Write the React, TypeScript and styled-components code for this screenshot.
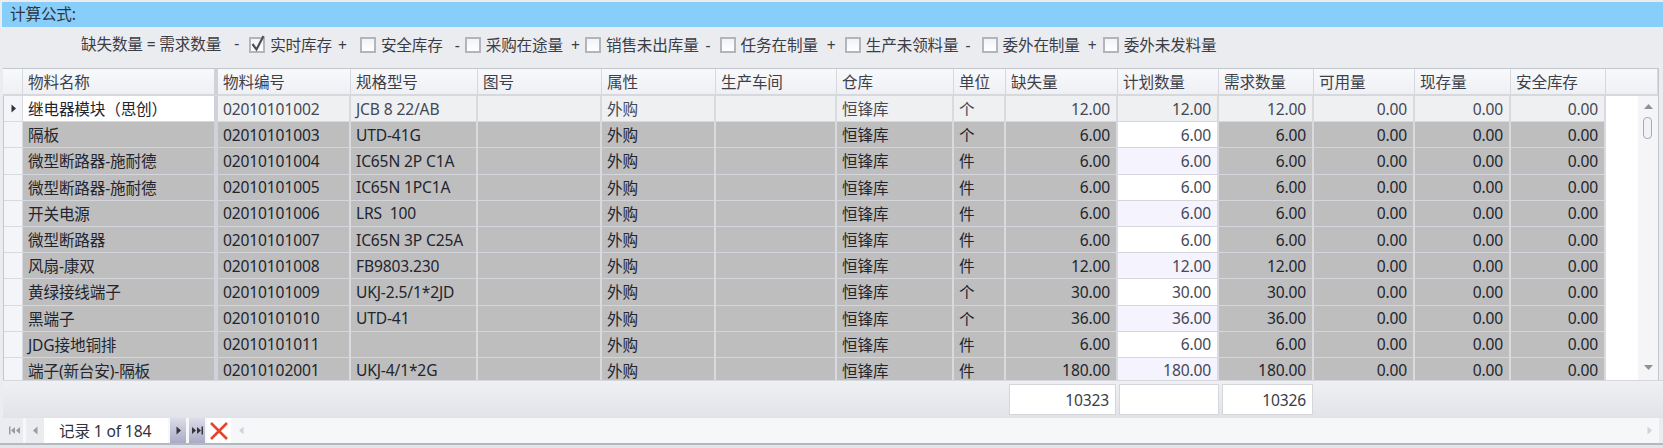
import React from 'react';
import styled, { createGlobalStyle } from 'styled-components';

const GRID = '20px 195px 133px 127px 124px 114px 121px 117px 52px 112px 101px 95px 101px 96px 95px';

const GlobalStyle = createGlobalStyle`
  html, body {
    margin: 0;
    padding: 0;
    background: #ebecf0;
    overflow: hidden;
  }
  * {
    box-sizing: border-box;
  }
`;

const Page = styled.div`
  width: 1663px;
  height: 448px;
  display: flex;
  flex-direction: column;
  padding-top: 2px;
  background: #ebecf0;
  font-family: 'Noto Sans', 'Noto Sans CJK SC', sans-serif;
  font-size: 15.6px;
  letter-spacing: -0.15px;
  color: #33363f;
  overflow: hidden;
`;

const TitleBar = styled.div`
  height: 25px;
  flex: none;
  display: flex;
  align-items: center;
  margin-left: 2px;
  padding-left: 8px;
  background: #87cefa;
  color: #30343c;
  line-height: 1;
`;

const Toolbar = styled.div`
  height: 41px;
  flex: none;
  display: flex;
  align-items: center;
  padding: 0 0 6px 81px;
  color: #3a3d46;
  white-space: nowrap;
`;

const Lead = styled.span`
  display: flex;
  flex: none;
  padding-bottom: 3px;
`;

const Op = styled.span<{ $width: number; $pad: number }>`
  width: ${(p) => p.$width}px;
  padding-left: ${(p) => p.$pad}px;
  flex: none;
`;

const Term = styled.label`
  display: flex;
  align-items: center;
  gap: 5px;
  flex: none;
`;

const Box = styled.span`
  width: 16px;
  height: 16px;
  flex: none;
  position: relative;
  border: 2px solid #b3b5bc;
  background: linear-gradient(#f2f3f5, #ffffff);
`;

const Tick = styled.svg`
  position: absolute;
  left: -1px;
  top: -5px;
  overflow: visible;
`;

const Table = styled.div`
  margin: 0 4px 0 3px;
  display: flex;
  flex-direction: column;
  border-top: 1px solid #c4c6cd;
  border-left: 1px solid #c4c6cd;
  border-right: 1px solid #c4c6cd;
`;

const HeaderRow = styled.div`
  display: grid;
  grid-template-columns: ${GRID} 1fr;
  margin-left: -1px;
  height: 27px;
`;

const HeaderCell = styled.div<{ $thick?: boolean }>`
  display: flex;
  align-items: center;
  padding: 0 0 1px 5px;
  background: linear-gradient(#f8f9fb, #eff0f4);
  border-right: ${(p) => (p.$thick ? '4px solid #d0d2d9' : '1px solid #d6d8de')};
  border-bottom: 2px solid #d6d8de;
  color: #3d4049;
  white-space: nowrap;
`;

const Body = styled.div`
  display: flex;
  height: 284px;
  overflow: hidden;
  background: #ffffff;
`;

const Rows = styled.div`
  width: 1602px;
  flex: none;
`;

const Row = styled.div`
  display: grid;
  grid-template-columns: ${GRID};
  margin-left: -1px;
  height: 26.2px;
`;

const Cell = styled.div<{ $bg: string; $right?: boolean; $thick?: boolean; $dim?: boolean }>`
  display: flex;
  align-items: center;
  justify-content: ${(p) => (p.$right ? 'flex-end' : 'flex-start')};
  padding: ${(p) => (p.$right ? '0 6px 0 0' : '0 0 0 5px')};
  background: ${(p) => p.$bg};
  border-right: ${(p) => (p.$thick ? '4px solid #d0d2d9' : '2px solid #d9dae0')};
  border-bottom: 1px solid #d6d7de;
  color: ${(p) => (p.$dim ? '#454856' : '#22252e')};
  white-space: pre;
  overflow: hidden;
`;

const Indicator = styled.div`
  display: flex;
  align-items: center;
  justify-content: center;
  background: #f4f5f8;
  border-left: 1px solid #c4c6cd;
  border-right: 1px solid #d9dae0;
  border-bottom: 1px solid #d9dae0;
`;

const Blank = styled.div`
  flex: 1;
  background: #ffffff;
`;

const ScrollBar = styled.div`
  width: 20px;
  flex: none;
  position: relative;
  background: #f5f5f8;
`;

const ArrowSlot = styled.svg<{ $bottom?: boolean }>`
  position: absolute;
  left: 6px;
  ${(p) => (p.$bottom ? 'bottom: 10px;' : 'top: 8px;')}
`;

const Thumb = styled.div`
  position: absolute;
  left: 5px;
  top: 21px;
  width: 9px;
  height: 22px;
  border: 1px solid #a9abb3;
  border-radius: 4px;
  background: #f1f2f5;
`;

const Footer = styled.div`
  display: grid;
  grid-template-columns: ${GRID};
  height: 38px;
  flex: none;
  margin-left: 3px;
  padding: 3px 0;
  background: linear-gradient(#eff0f3, #e2e3e8);
  border-top: 1px solid #d6d7dd;
`;

const FooterCell = styled.div<{ $col: number; $ml: number; $mr: number }>`
  grid-column: ${(p) => p.$col};
  margin-left: ${(p) => p.$ml}px;
  margin-right: ${(p) => p.$mr}px;
  display: flex;
  align-items: center;
  justify-content: flex-end;
  padding-right: 6px;
  background: #ffffff;
  border: 1px solid #d4d6dc;
  color: #3a3d48;
`;

const Nav = styled.div`
  height: 25px;
  flex: none;
  display: flex;
  align-items: stretch;
  margin-left: 5px;
  margin-right: 4px;
  background: #f6f7f9;
`;

const NavButton = styled.div<{ $state: 'off' | 'on' | 'del' }>`
  width: ${(p) => (p.$state === 'del' ? '24px' : p.$state === 'on' ? '16px' : '18px')};
  flex: none;
  display: flex;
  align-items: center;
  justify-content: center;
  margin-left: ${(p) => (p.$state === 'del' ? '-1px' : '0')};
  margin-right: ${(p) => (p.$state === 'del' ? '0' : '3px')};
  background: ${(p) =>
    p.$state === 'on'
      ? 'linear-gradient(#dcdce9, #abaac6)'
      : p.$state === 'off'
        ? '#ebecef'
        : '#ffffff'};
`;

const RecordLabel = styled.div`
  width: 124px;
  flex: none;
  margin: 0 2px 0 -3px;
  padding-left: 15px;
  display: flex;
  align-items: center;
  background: #ffffff;
  color: #2f3340;
  white-space: nowrap;
`;

const NavTrack = styled.div`
  flex: 1;
  display: flex;
  align-items: center;
  justify-content: space-between;
  padding: 0 6px 0 7px;
`;

const BottomEdge = styled.div`
  flex: 1;
  background: linear-gradient(#b6b8bf 0 2px, #e4e5ea 2px);
`;

const Arrow = ({ dir, color }: { dir: 'l' | 'r'; color: string }) => (
  <svg width="7" height="11" viewBox="0 0 7 11">
    <path d={dir === 'r' ? 'M1.5 1.5 L6 5.5 L1.5 9.5 Z' : 'M5.5 1.5 L1 5.5 L5.5 9.5 Z'} fill={color} />
  </svg>
);

const Double = ({ dir, color }: { dir: 'l' | 'r'; color: string }) => (
  <svg width="13" height="11" viewBox="0 0 13 11">
    {dir === 'l' ? (
      <>
        <rect x="1" y="1.5" width="1.5" height="8" fill={color} />
        <path d="M7 2 L3 5.5 L7 9 Z M12 2 L8 5.5 L12 9 Z" fill={color} />
      </>
    ) : (
      <>
        <path d="M1 2 L5 5.5 L1 9 Z M6 2 L10 5.5 L6 9 Z" fill={color} />
        <rect x="10.5" y="1.5" width="1.5" height="8" fill={color} />
      </>
    )}
  </svg>
);

const columns = ['物料名称', '物料编号', '规格型号', '图号', '属性', '生产车间', '仓库', '单位', '缺失量', '计划数量', '需求数量', '可用量', '现存量', '安全库存'];

const rows = [
  ['继电器模块（思创）', '02010101002', 'JCB 8 22/AB', '个', '12.00'],
  ['隔板', '02010101003', 'UTD-41G', '个', '6.00'],
  ['微型断路器-施耐德', '02010101004', 'IC65N 2P C1A', '件', '6.00'],
  ['微型断路器-施耐德', '02010101005', 'IC65N 1PC1A', '件', '6.00'],
  ['开关电源', '02010101006', 'LRS  100', '件', '6.00'],
  ['微型断路器', '02010101007', 'IC65N 3P C25A', '件', '6.00'],
  ['风扇-康双', '02010101008', 'FB9803.230', '件', '12.00'],
  ['黄绿接线端子', '02010101009', 'UKJ-2.5/1*2JD', '个', '30.00'],
  ['黑端子', '02010101010', 'UTD-41', '个', '36.00'],
  ['JDG接地铜排', '02010101011', '', '件', '6.00'],
  ['端子(新台安)-隔板', '02010102001', 'UKJ-4/1*2G', '件', '180.00'],
];

const terms = [
  { label: '实时库存', checked: true, op: '+', width: 28, pad: 6 },
  { label: '安全库存', op: '-', width: 22, pad: 12 },
  { label: '采购在途量', op: '+', width: 22, pad: 8 },
  { label: '销售未出库量', op: '-', width: 21, pad: 7 },
  { label: '任务在制量', op: '+', width: 27, pad: 9 },
  { label: '生产未领料量', op: '-', width: 23, pad: 7 },
  { label: '委外在制量', op: '+', width: 23, pad: 8 },
  { label: '委外未发料量' },
];

const GRAY = '#bebebe';
const FIRST = '#eff0f2';

const App: React.FC = () => {
  return (
    <Page>
      <GlobalStyle />
      <TitleBar>计算公式:</TitleBar>
      <Toolbar>
        <Lead>
          缺失数量 = 需求数量
          <Op $width={28} $pad={13}>-</Op>
        </Lead>
        {terms.map((t) => (
          <React.Fragment key={t.label}>
            <Term>
              <Box>
                {t.checked && (
                  <Tick width="16" height="18" viewBox="0 0 16 18">
                    <path d="M2.5 10 L6.5 15.5 L13.5 2" fill="none" stroke="#4c4f58" strokeWidth="2.2" />
                  </Tick>
                )}
              </Box>
              {t.label}
            </Term>
            {t.op && <Op $width={t.width!} $pad={t.pad!}>{t.op}</Op>}
          </React.Fragment>
        ))}
      </Toolbar>
      <Table>
        <HeaderRow>
          <HeaderCell />
          {columns.map((c, i) => (
            <HeaderCell key={c} $thick={i === 0}>{c}</HeaderCell>
          ))}
          <HeaderCell />
        </HeaderRow>
        <Body>
          <Rows>
            {rows.map((r, i) => {
              const bg = i === 0 ? FIRST : GRAY;
              const plan = i === 0 ? FIRST : i % 2 === 1 ? '#ffffff' : '#f5f3fd';
              const dim = i === 0;
              return (
                <Row key={r[1]}>
                  <Indicator>
                    {i === 0 && <Arrow dir="r" color="#30333c" />}
                  </Indicator>
                  <Cell $bg={i === 0 ? '#ffffff' : GRAY} $thick>{r[0]}</Cell>
                  <Cell $bg={bg} $dim={dim}>{r[1]}</Cell>
                  <Cell $bg={bg} $dim={dim}>{r[2]}</Cell>
                  <Cell $bg={bg} />
                  <Cell $bg={bg} $dim={dim}>外购</Cell>
                  <Cell $bg={bg} />
                  <Cell $bg={bg} $dim={dim}>恒锋库</Cell>
                  <Cell $bg={bg} $dim={dim}>{r[3]}</Cell>
                  <Cell $bg={bg} $dim={dim} $right>{r[4]}</Cell>
                  <Cell $bg={plan} $dim $right>{r[4]}</Cell>
                  <Cell $bg={bg} $dim={dim} $right>{r[4]}</Cell>
                  <Cell $bg={bg} $dim={dim} $right>0.00</Cell>
                  <Cell $bg={bg} $dim={dim} $right>0.00</Cell>
                  <Cell $bg={bg} $dim={dim} $right>0.00</Cell>
                </Row>
              );
            })}
          </Rows>
          <Blank />
          <ScrollBar>
            <ArrowSlot width="9" height="5" viewBox="0 0 9 5">
              <path d="M0 5 L4.5 0 L9 5 Z" fill="#8f9199" />
            </ArrowSlot>
            <Thumb />
            <ArrowSlot $bottom width="9" height="5" viewBox="0 0 9 5">
              <path d="M0 0 L4.5 5 L9 0 Z" fill="#8f9199" />
            </ArrowSlot>
          </ScrollBar>
        </Body>
      </Table>
      <Footer>
        <FooterCell $col={10} $ml={3} $mr={2}>10323</FooterCell>
        <FooterCell $col={11} $ml={1} $mr={0} />
        <FooterCell $col={12} $ml={3} $mr={1}>10326</FooterCell>
      </Footer>
      <Nav>
        <NavButton $state="off"><Double dir="l" color="#9a9ca4" /></NavButton>
        <NavButton $state="off"><Arrow dir="l" color="#9a9ca4" /></NavButton>
        <RecordLabel>记录 1 of 184</RecordLabel>
        <NavButton $state="on"><Arrow dir="r" color="#33353f" /></NavButton>
        <NavButton $state="on"><Double dir="r" color="#33353f" /></NavButton>
        <NavButton $state="del">
          <svg width="20" height="20" viewBox="0 0 20 20">
            <path d="M2 2 L18 18 M18 2 L2 18" stroke="#e8432f" strokeWidth="2.6" fill="none" />
          </svg>
        </NavButton>
        <NavTrack>
          <Arrow dir="l" color="#d2d3d8" />
          <Arrow dir="r" color="#d2d3d8" />
        </NavTrack>
      </Nav>
      <BottomEdge />
    </Page>
  );
};

export default App;
